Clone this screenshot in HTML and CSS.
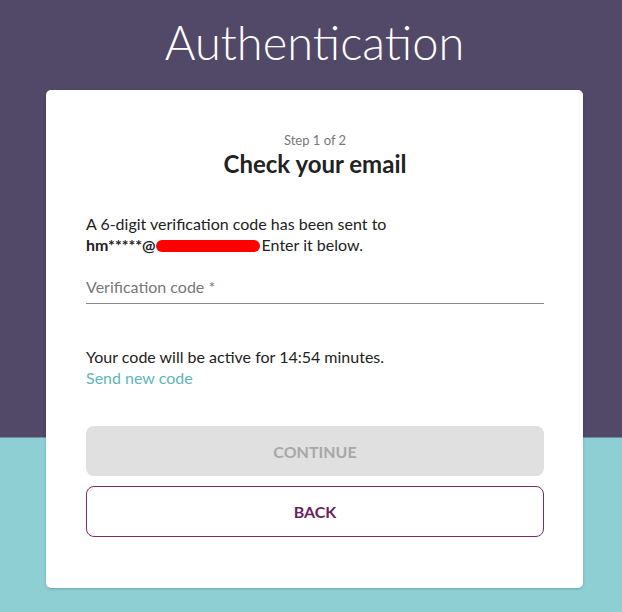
FILE: index.html
```html
<!DOCTYPE html>
<html>
<head>
<meta charset="utf-8">
<link rel="stylesheet" href="styles.css">
</head>
<body>
<div class="page">
  <h1 class="title">Authentication</h1>
  <div class="card">
    <div class="step">Step 1 of 2</div>
    <h2 class="heading">Check your email</h2>
    <p class="info">A 6-digit verification code has been sent to<br><b>hm*****@</b><span class="redact"></span>Enter it below.</p>
    <div class="field">
      <span class="label">Verification code *</span>
    </div>
    <p class="timer">Your code will be active for 14:54 minutes.</p>
    <a class="resend">Send new code</a>
    <div class="buttons">
      <button class="btn btn-continue">CONTINUE</button>
      <button class="btn btn-back">BACK</button>
    </div>
  </div>
</div>
</body>
</html>
```
FILE: styles.css
```css
html, body { margin: 0; padding: 0; }
body {
  font-family: Lato, "Open Sans", sans-serif;
  background: linear-gradient(to bottom, #524868 0, #524868 437px, #8ecfd4 438px, #8ecfd4 100%);
  min-height: 612px;
  height: 612px;
  overflow: hidden;
}
.page {
  width: 537px;
  margin-left: 46px;
  padding-top: 12px;
}
.title {
  margin: 0;
  text-align: center;
  color: #fff;
  font-weight: 300;
  font-size: 47px;
  line-height: 60px;
  height: 78px;
}
.card {
  background: #fff;
  border-radius: 5px;
  box-shadow: 0 1px 3px rgba(0,0,0,0.2);
  padding: 42px 39px 50px 40px;
  height: 498px;
  box-sizing: border-box;
}
.step {
  text-align: center;
  color: #777;
  font-size: 13px;
  line-height: 16px;
}
.heading {
  margin: 2px 0 0;
  text-align: center;
  color: #222;
  font-size: 24px;
  font-weight: 700;
  line-height: 28px;
}
.info {
  margin: 35px 0 0;
  font-size: 16px;
  line-height: 21px;
  color: #222;
}
.info b { font-weight: 700; }
.redact {
  display: inline-block;
  width: 104px;
  height: 12px;
  background: #f00;
  border-radius: 6px;
  vertical-align: -1px;
  margin-right: 2px;
}
.field {
  margin-top: 22px;
  border-bottom: 1px solid #8a8a8a;
  padding-bottom: 6px;
}
.label {
  color: #777;
  font-size: 16px;
  line-height: 20px;
}
.timer {
  margin: 42px 0 0;
  font-size: 16px;
  line-height: 21px;
  color: #222;
}
.resend {
  display: block;
  color: #5fb6bc;
  font-size: 16px;
  line-height: 21px;
}
.buttons {
  margin-top: 38px;
  display: flex;
  flex-direction: column;
  gap: 10px;
}
.btn {
  font-family: inherit;
  font-size: 16px;
  font-weight: 700;
  height: 51px;
  border-radius: 8px;
  width: 100%;
}
.btn-continue {
  height: 50px;
  background: #e0e0e0;
  border: none;
  color: #a8a8a8;
}
.btn-back {
  background: #fff;
  border: 1px solid #7a2d6e;
  color: #6b1f5f;
}
```
